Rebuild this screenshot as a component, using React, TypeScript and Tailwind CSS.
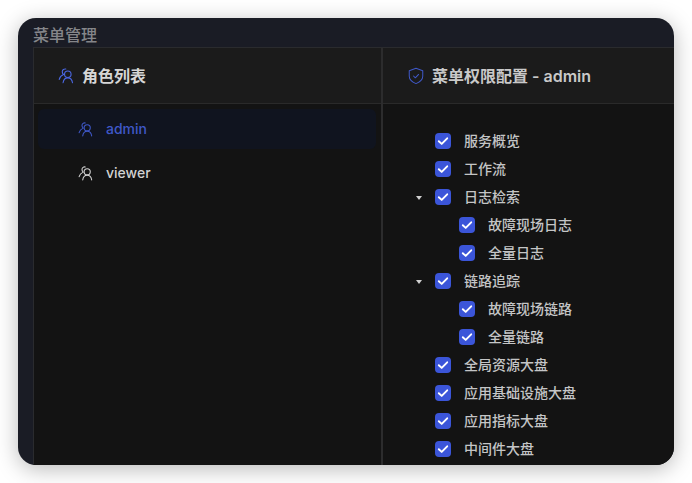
import React from "react";

type TreeItem = { label: string; depth: 0 | 1; caret?: boolean };

const tree: TreeItem[] = [
  { label: "服务概览", depth: 0 },
  { label: "工作流", depth: 0 },
  { label: "日志检索", depth: 0, caret: true },
  { label: "故障现场日志", depth: 1 },
  { label: "全量日志", depth: 1 },
  { label: "链路追踪", depth: 0, caret: true },
  { label: "故障现场链路", depth: 1 },
  { label: "全量链路", depth: 1 },
  { label: "全局资源大盘", depth: 0 },
  { label: "应用基础设施大盘", depth: 0 },
  { label: "应用指标大盘", depth: 0 },
  { label: "中间件大盘", depth: 0 },
];

const fontClass = "font-['Inter','Noto_Sans_CJK_SC',sans-serif]";

function RolesIcon({ className }: { className?: string }) {
  return (
    <svg viewBox="0 0 16 16" fill="none" className={className} aria-hidden="true">
      <circle cx="9.6" cy="6.4" r="2.9" stroke="currentColor" strokeWidth="1" />
      <path d="M5.4 14c.4-2.5 2-4.3 4.2-4.3s3.8 1.8 4.2 4.3" stroke="currentColor" strokeWidth="1" strokeLinecap="round" />
      <path d="M7.8 1.8C6.2 1.5 4.8 2.4 4.7 4c-.1 1.2.4 2.1 1.1 2.7C3.9 7.5 2.5 9 2 11" stroke="currentColor" strokeWidth="1" strokeLinecap="round" />
    </svg>
  );
}

function ShieldIcon({ className }: { className?: string }) {
  return (
    <svg viewBox="0 0 16 16" fill="none" className={className} aria-hidden="true">
      <path d="M8 1.2l6 2.1v5c0 3-2.4 5-6 6.5-3.6-1.5-6-3.5-6-6.5v-5l6-2.1z" stroke="currentColor" strokeWidth="0.9" strokeLinejoin="round" />
      <path d="M5.8 8l1.6 1.6 2.9-3" stroke="currentColor" strokeWidth="0.9" strokeLinecap="round" strokeLinejoin="round" />
    </svg>
  );
}

function Checkbox() {
  return (
    <span className="flex h-4 w-4 shrink-0 items-center justify-center rounded-[4px] bg-[#3b55d9]">
      <svg viewBox="0 0 16 16" fill="none" className="h-4 w-4" aria-hidden="true">
        <path d="M3.8 8.2l2.9 2.7 5.5-5.6" stroke="#fff" strokeWidth="1.9" strokeLinecap="round" strokeLinejoin="round" />
      </svg>
    </span>
  );
}

function TreeRow({ item }: { item: TreeItem }) {
  return (
    <div className={`flex h-7 items-center ${item.depth === 1 ? "pl-[76px]" : "pl-[52px]"}`}>
      <Checkbox />
      <span className="-mt-px ml-[13px] whitespace-nowrap text-[14px] font-medium text-[#c4c5c6]">{item.label}</span>
    </div>
  );
}

function Caret() {
  return <span className="absolute left-[33px] top-1/2 h-0 w-0 -translate-y-[1px] border-x-[3.5px] border-t-[4px] border-x-transparent border-t-[#d0d0d0]" />;
}

export default function App() {
  return (
    <div className={`h-[483px] w-[692px] overflow-hidden bg-white px-[18px] pt-[18px] ${fontClass}`}>
      <div className="flex h-[447px] w-[656px] flex-col overflow-hidden rounded-[18px] bg-[#1a1c25] pl-[15px] shadow-[0_4px_22px_rgba(0,0,0,0.28)]">
        <div className="h-[29px] pt-[6px] text-[16px] font-medium leading-[22px] text-[#85868a]">菜单管理</div>
        <div className="flex min-h-0 flex-1 border-l border-t border-[#2a2b2e] bg-[#131313]">
          <div className="w-[349px] shrink-0 border-r-2 border-[#2c2c2d]">
            <div className="flex h-[56px] items-center border-b border-[#2a2a2a] bg-[#1b1b1b] pl-[23px]">
              <RolesIcon className="h-[18px] w-[18px] text-[#4a66e0]" />
              <span className="ml-[7px] text-[16px] font-semibold text-[#d6d6d6]">角色列表</span>
            </div>
            <div className="pl-[4px] pr-[5px] pt-[5px]">
              <div className="flex h-10 items-center rounded-[6px] bg-[#10141f] pl-[39px] text-[#3f58c8]">
                <RolesIcon className="h-[17px] w-[17px]" />
                <span className="-mt-px ml-3 text-[14px] font-medium">admin</span>
              </div>
              <div className="mt-1 flex h-10 items-center pl-[39px] text-[#d2d2d2]">
                <RolesIcon className="h-[17px] w-[17px]" />
                <span className="-mt-px ml-3 text-[14px] font-medium">viewer</span>
              </div>
            </div>
          </div>
          <div className="min-w-0 flex-1">
            <div className="flex h-[56px] items-center border-b border-[#2a2a2a] bg-[#1b1b1b] pl-[24px]">
              <ShieldIcon className="h-[18px] w-[18px] text-[#3f58c8]" />
              <span className="ml-[7px] text-[16px] font-semibold text-[#c9c9c9]">菜单权限配置 - admin</span>
            </div>
            <div className="pt-[23px]">
              {tree.map((item) => (
                <div key={item.label} className="relative">
                  {item.caret ? <Caret /> : null}
                  <TreeRow item={item} />
                </div>
              ))}
            </div>
          </div>
        </div>
      </div>
    </div>
  );
}
